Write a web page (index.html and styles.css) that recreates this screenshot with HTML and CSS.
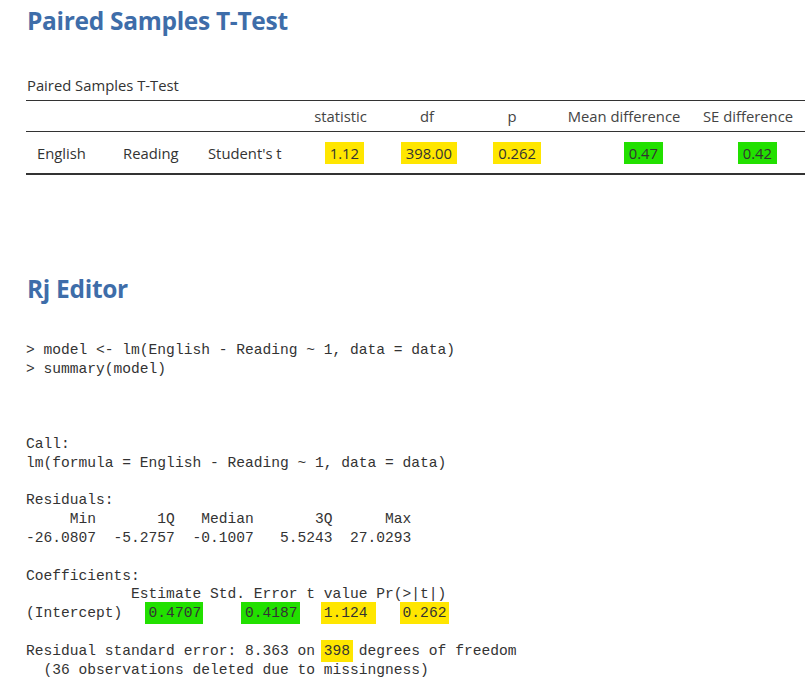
FILE: index.html
```
<!DOCTYPE html>
<html>
<head>
<meta charset="utf-8">
<link rel="stylesheet" href="styles.css">
</head>
<body>
<h1 class="title">Paired Samples T-Test</h1>
<div class="subtitle">Paired Samples T-Test</div>
<div class="tbl">
  <div class="row row-head">
    <div class="cell"></div>
    <div class="cell"></div>
    <div class="cell"></div>
    <div class="cell ch">statistic</div>
    <div class="cell ch">df</div>
    <div class="cell ch">p</div>
    <div class="cell ch">Mean difference</div>
    <div class="cell ch ch-last">SE difference</div>
  </div>
  <div class="row row-data">
    <div class="cell ct">English</div>
    <div class="cell ct">Reading</div>
    <div class="cell ct">Student's t</div>
    <div class="cell cv v4"><span class="hl hl-y">1.12</span></div>
    <div class="cell cv v5"><span class="hl hl-y">398.00</span></div>
    <div class="cell cv v6"><span class="hl hl-y">0.262</span></div>
    <div class="cell cv v7"><span class="hl hl-g">0.47</span></div>
    <div class="cell cv v8"><span class="hl hl-g">0.42</span></div>
  </div>
</div>

<h1 class="title title-rj">Rj Editor</h1>
<pre class="code">&gt; model &lt;- lm(English - Reading ~ 1, data = data)
&gt; summary(model)



Call:
lm(formula = English - Reading ~ 1, data = data)

Residuals:
     Min       1Q   Median       3Q      Max 
-26.0807  -5.2757  -0.1007   5.5243  27.0293 

Coefficients:
            Estimate Std. Error t value Pr(&gt;|t|)
(Intercept)   <span class="mk mk-g">0.4707</span>     <span class="mk mk-g">0.4187</span>   <span class="mk mk-y mk-wide">1.124</span>    <span class="mk mk-y">0.262</span>

Residual standard error: 8.363 on <span class="mk mk-y">398</span> degrees of freedom
  (36 observations deleted due to missingness)
</pre>
</body>
</html>
```
FILE: styles.css
```
html, body {
  background: #ffffff;
}
body {
  margin: 0;
  padding: 0 0 0 26px;
  font-family: "Open Sans", "Noto Sans", sans-serif;
  color: #333333;
}
.title {
  font-family: "Open Sans", sans-serif;
  font-weight: 700;
  font-size: 24.5px;
  line-height: 30px;
  color: #3e6da9;
  margin: 6px 0 0 1px;
  letter-spacing: -0.3px;
}
.subtitle {
  font-size: 14.8px;
  line-height: 20px;
  margin: 39px 0 0 1px;
  color: #333333;
}
.tbl {
  margin-top: 5px;
  width: 779px;
  border-top: 1px solid #333333;
  border-bottom: 2px solid #333333;
  font-size: 14.8px;
}
.row {
  display: grid;
  grid-template-columns: 86px 85px 103px 81px 92px 78px 146px 108px;
  align-items: center;
}
.row-head {
  height: 30px;
  border-bottom: 1px solid #333333;
}
.row-data {
  height: 41px;
}
.cell {
  white-space: nowrap;
  line-height: 20px;
}
.ch {
  text-align: center;
  color: #444444;
}
.ch-last {
  padding-right: 6px;
}
.ct {
  padding-left: 11px;
}
.cv {
  text-align: right;
}
.v4 { padding-right: 17px; }
.v5 { padding-right: 16px; }
.v6 { padding-right: 10px; }
.v7 { padding-right: 34px; }
.v8 { padding-right: 28px; }
.hl {
  padding: 1px 5px;
  color: #333333;
}
.hl-y { background: #ffe600; }
.hl-g { background: #22e000; }

.title-rj {
  margin-top: 99px;
}
.code {
  margin: 37px 0 0 0;
  font-family: "Liberation Mono", "DejaVu Sans Mono", monospace;
  font-size: 14.6px;
  line-height: 18.8px;
  color: #333333;
}
.mk {
  padding: 3px 0;
}
.mk-g {
  background: #22e000;
  box-shadow: -4px 0 0 0 #22e000, 2px 0 0 0 #22e000;
}
.mk-y {
  background: #ffe600;
  box-shadow: -3px 0 0 0 #ffe600, 3px 0 0 0 #ffe600;
}
.mk-y.mk-wide {
  box-shadow: -3px 0 0 0 #ffe600, 8px 0 0 0 #ffe600;
}
```
